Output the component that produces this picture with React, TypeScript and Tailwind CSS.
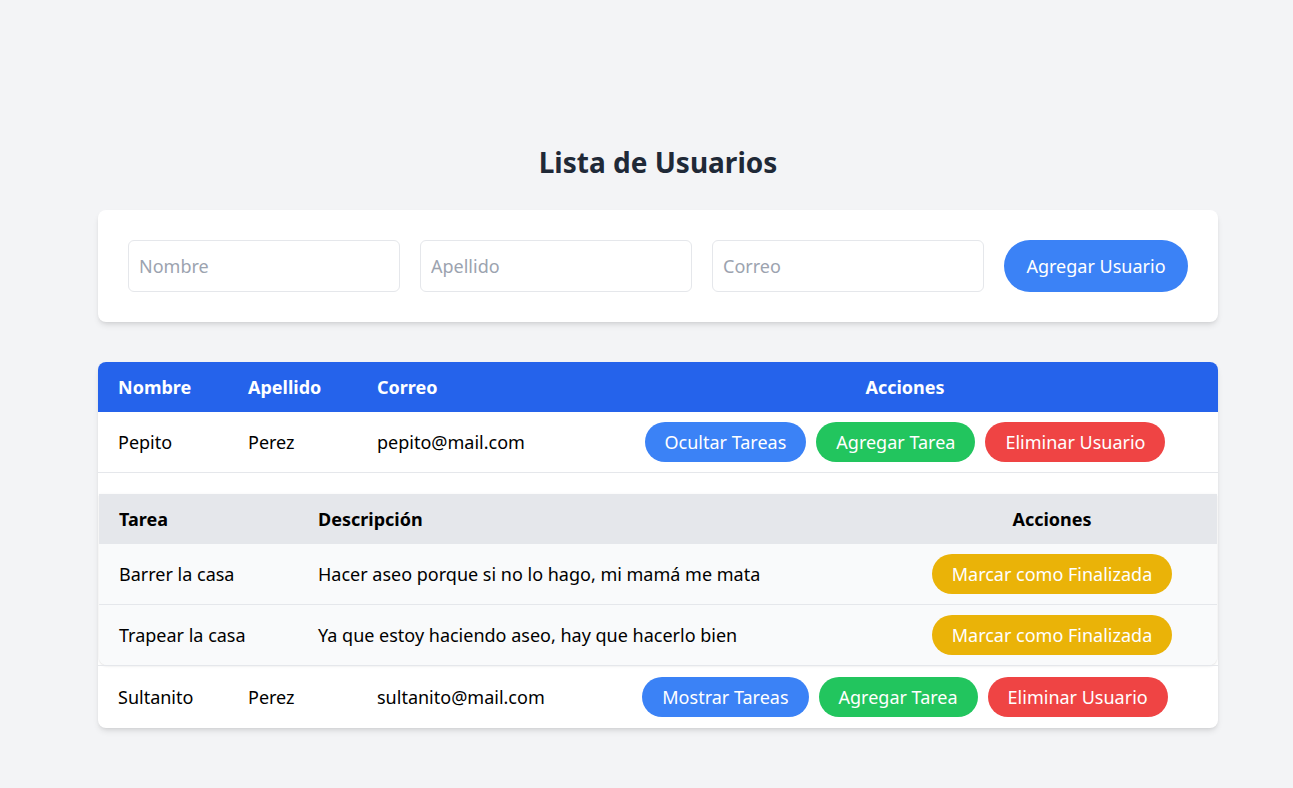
import React from "react";

const font = { fontFamily: '"Noto Sans", "Open Sans", sans-serif' };

function Btn({ color, children }: { color: string; children: React.ReactNode }) {
  return (
    <button className={`h-10 rounded-full px-5 text-lg text-white whitespace-nowrap ${color}`}>{children}</button>
  );
}

export default function App() {
  const tasks = [
    { t: "Barrer la casa", d: "Hacer aseo porque si no lo hago, mi mamá me mata" },
    { t: "Trapear la casa", d: "Ya que estoy haciendo aseo, hay que hacerlo bien" },
  ];
  return (
    <div className="min-h-[788px] bg-[#f3f4f6] pt-[144px] pb-[60px]" style={font}>
      <div className="ml-[98px] w-[1120px]">
        <h1 className="text-center text-[28px] font-bold leading-9 text-[#1f2937]">Lista de Usuarios</h1>
        <div className="mt-[30px] flex gap-5 rounded-lg bg-white p-[30px] shadow-md">
          {["Nombre", "Apellido", "Correo"].map((p) => (
            <input
              key={p}
              placeholder={p}
              className="h-[52px] min-w-0 flex-1 rounded-md border border-[#e5e7eb] px-[10px] text-lg text-gray-900 placeholder:text-[#9ca3af] outline-none"
            />
          ))}
          <button className="h-[52px] w-[184px] shrink-0 rounded-full bg-[#3b82f6] text-lg text-white whitespace-nowrap">Agregar Usuario</button>
        </div>

        <div className="mt-10 overflow-hidden rounded-lg bg-white shadow-md">
          <table className="w-full table-fixed border-collapse text-lg text-black">
            <colgroup>
              <col className="w-[130px]" />
              <col className="w-[129px]" />
              <col className="w-[235px]" />
              <col />
            </colgroup>
            <thead>
              <tr className="h-[50px] bg-[#2563eb] text-white">
                <th className="px-5 text-left font-bold">Nombre</th>
                <th className="px-5 text-left font-bold">Apellido</th>
                <th className="px-5 text-left font-bold">Correo</th>
                <th className="px-5 text-center font-bold">Acciones</th>
              </tr>
            </thead>
            <tbody>
              <tr className="h-[60px] border-b border-[#e5e7eb]">
                <td className="px-5">Pepito</td>
                <td className="px-5">Perez</td>
                <td className="px-5">pepito@mail.com</td>
                <td className="px-5">
                  <div className="flex justify-center gap-[10px]">
                    <Btn color="bg-[#3b82f6]">Ocultar Tareas</Btn>
                    <Btn color="bg-[#22c55e]">Agregar Tarea</Btn>
                    <Btn color="bg-[#ef4444]">Eliminar Usuario</Btn>
                  </div>
                </td>
              </tr>
              <tr className="border-b border-[#e5e7eb]">
                <td colSpan={4} className="px-px pt-[21px] pb-0">
                  <div className="overflow-hidden rounded-b-lg shadow-sm">
                    <table className="w-full table-fixed border-collapse">
                      <colgroup>
                        <col className="w-[199px]" />
                        <col className="w-[589px]" />
                        <col />
                      </colgroup>
                      <thead>
                        <tr className="h-[50px] bg-[#e5e7eb]">
                          <th className="px-5 text-left font-bold">Tarea</th>
                          <th className="px-5 text-left font-bold">Descripción</th>
                          <th className="px-5 text-center font-bold">Acciones</th>
                        </tr>
                      </thead>
                      <tbody>
                        {tasks.map((x, i) => (
                          <tr key={i} className={`bg-[#f9fafb] ${i === 0 ? "h-[61px] border-b border-[#e5e7eb]" : "h-[60px]"}`}>
                            <td className="px-5">{x.t}</td>
                            <td className="px-5">{x.d}</td>
                            <td className="px-5 text-center">
                              <Btn color="bg-[#eab308]">Marcar como Finalizada</Btn>
                            </td>
                          </tr>
                        ))}
                      </tbody>
                    </table>
                  </div>
                </td>
              </tr>
              <tr className="h-[63px]">
                <td className="px-5">Sultanito</td>
                <td className="px-5">Perez</td>
                <td className="px-5">sultanito@mail.com</td>
                <td className="px-5">
                  <div className="flex justify-center gap-[10px]">
                    <Btn color="bg-[#3b82f6]">Mostrar Tareas</Btn>
                    <Btn color="bg-[#22c55e]">Agregar Tarea</Btn>
                    <Btn color="bg-[#ef4444]">Eliminar Usuario</Btn>
                  </div>
                </td>
              </tr>
            </tbody>
          </table>
        </div>
      </div>
    </div>
  );
}
